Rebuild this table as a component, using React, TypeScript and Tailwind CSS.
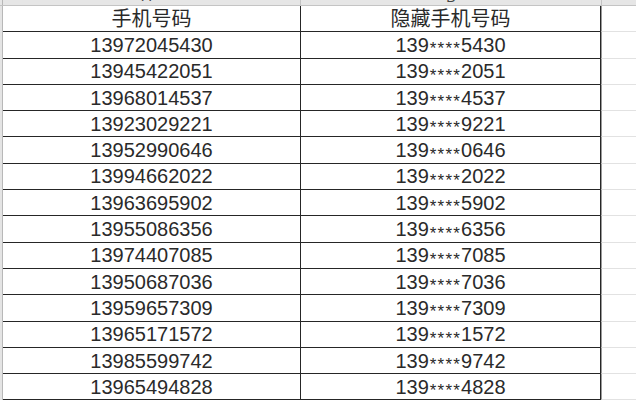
const phones = [
  '13972045430',
  '13945422051',
  '13968014537',
  '13923029221',
  '13952990646',
  '13994662022',
  '13963695902',
  '13955086356',
  '13974407085',
  '13950687036',
  '13959657309',
  '13965171572',
  '13985599742',
  '13965494828',
];

const font = { fontFamily: '"Liberation Sans", "Noto Sans CJK SC", sans-serif' };

function Masked({ phone }: { phone: string }) {
  return (
    <span className="flex items-center">
      <span>{phone.slice(0, 3)}</span>
      <span className="text-[17px] tracking-[1.2px] translate-y-[4px] pl-[1px]">****</span>
      <span>{phone.slice(7)}</span>
    </span>
  );
}

function Row({ a, b }: { a: React.ReactNode; b: React.ReactNode }) {
  return (
    <div className="flex h-[26.3px] shrink-0">
      <div className="w-[3px] bg-[#e4e4e4] border-r border-[#b8b8b8]" />
      <div className="w-[298px] flex items-center justify-center border-r border-b border-[#262626]">{a}</div>
      <div className="w-[300px] flex items-center justify-center border-r border-b border-[#262626]">{b}</div>
      <div className="flex-1 border-l border-[#9a9a9a] border-b border-b-[#e2e2e2]" />
    </div>
  );
}

export default function App() {
  return (
    <div className="w-[636px] h-[400px] overflow-hidden bg-white text-[20px] text-[#2a2a2a] leading-none flex flex-col" style={font}>
      <div className="flex h-[6px] shrink-0 bg-[#e6e6e6] border-b border-[#c4c4c4] overflow-hidden">
        <div className="w-[3px] border-r border-[#b8b8b8]" />
        <div className="w-[298px] flex items-end justify-center border-r border-[#c4c4c4]">
          <span className="text-[14px] text-[#444] leading-none mb-[2px] -ml-[10px]">A</span>
        </div>
        <div className="w-[301px] flex items-end justify-center border-r border-[#c4c4c4]">
          <span className="text-[14px] text-[#444] leading-none mb-[1px]">B</span>
        </div>
        <div className="flex-1" />
      </div>
      <Row a="手机号码" b="隐藏手机号码" />
      {phones.map((p) => (
        <Row key={p} a={p} b={<Masked phone={p} />} />
      ))}
    </div>
  );
}
